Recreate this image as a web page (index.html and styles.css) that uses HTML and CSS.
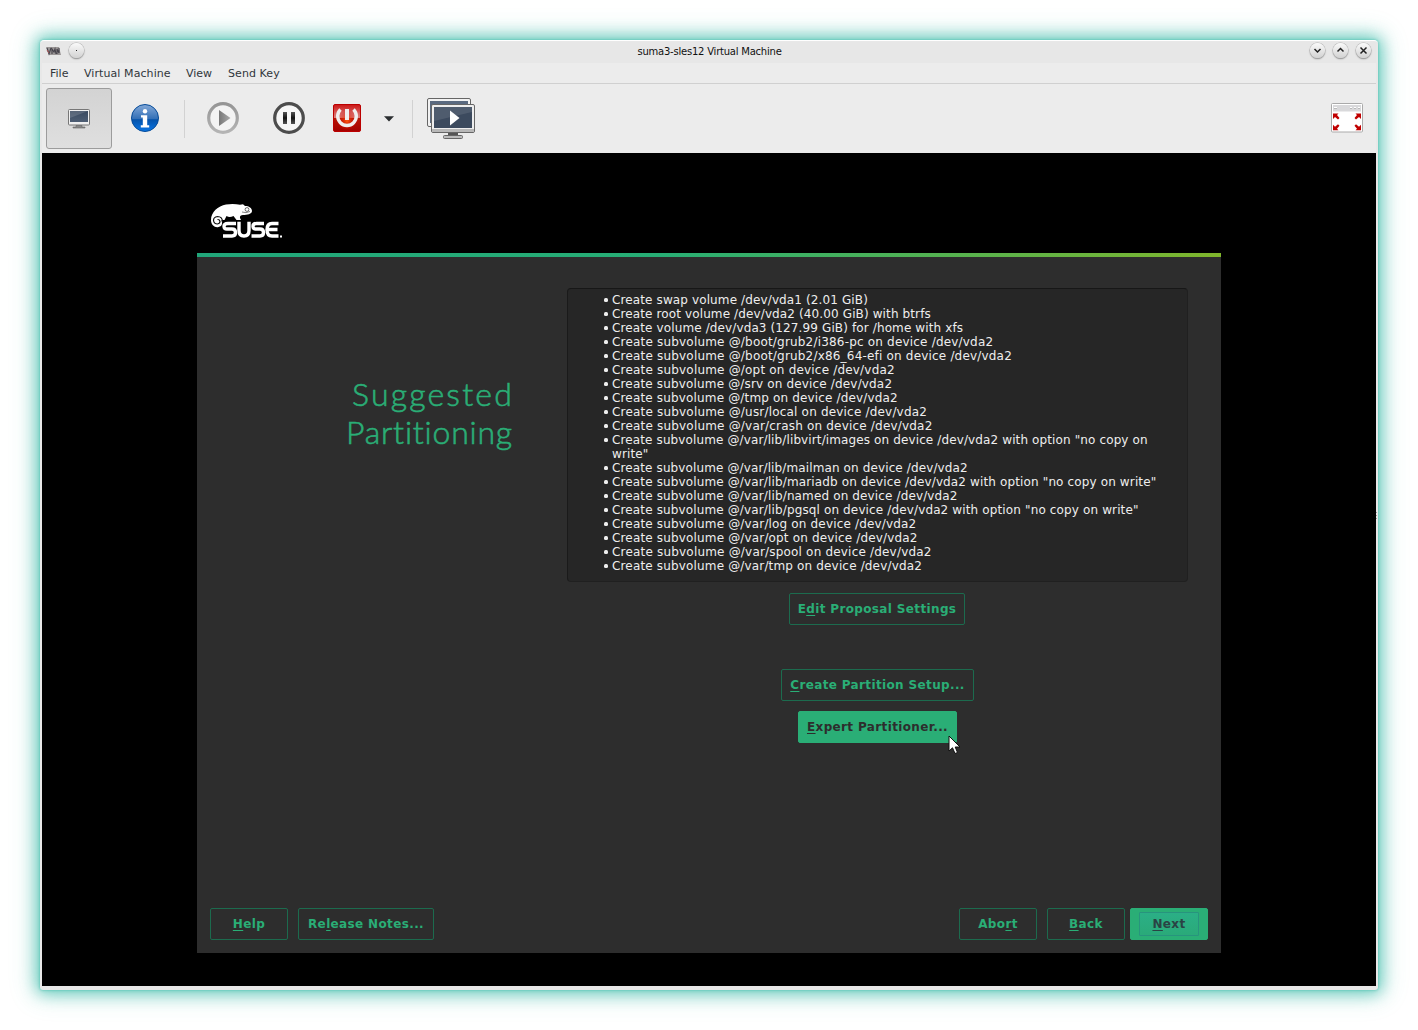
FILE: index.html
```html
<!DOCTYPE html>
<html lang="en">
<head>
<meta charset="utf-8">
<title>suma3-sles12 Virtual Machine</title>
<link rel="stylesheet" href="styles.css">
</head>
<body>
<div class="window">
  <header class="titlebar">
    <svg class="app-icon" width="16" height="10" viewBox="0 0 16 10"><path d="M0 1h13l2 8H3z" fill="#9a9696"/><path d="M1 2l2 6 2-6M6 8V3l2 3 1-3 1 5M11 8V3l2 4V2" fill="none" stroke="#45424a" stroke-width="1.1"/><path d="M1 4l2 3" stroke="#a55" /></svg>
    <span class="round pin"><svg width="15" height="15" viewBox="0 0 15 15"><rect x="7" y="7" width="1" height="1" fill="#222"/></svg></span>
    <h1 class="window-title">suma3-sles12 Virtual Machine</h1>
    <div class="controls">
      <span class="round"><svg width="15" height="15" viewBox="0 0 15 15"><path d="M4.500 6l3 3 3-3"/></svg></span>
      <span class="round"><svg width="15" height="15" viewBox="0 0 15 15"><path d="M4.500 8.500l3-3 3 3"/></svg></span>
      <span class="round"><svg width="15" height="15" viewBox="0 0 15 15"><path d="M4.500 4.500l6 6M10.500 4.500l-6 6"/></svg></span>
    </div>
  </header>
  <nav class="menu"><span class="m1">File</span><span class="m2">Virtual Machine</span><span class="m3">View</span><span class="m4">Send Key</span></nav>
  <div class="toolbar">
    <div class="tool active">
      <svg width="24" height="20" viewBox="0 0 24 20"><defs><linearGradient id="scr" x2="0" y2="1"><stop offset="0" stop-color="#3a4a60"/><stop offset="1" stop-color="#4e5e74"/></linearGradient></defs><rect x="1.500" y=".5" width="21" height="15.500" rx="1" fill="#f0f0f0" stroke="#777"/><rect x="3" y="2" width="18" height="11" fill="url(#scr)"/><path d="M3 2h18L3 9z" fill="#fff" opacity=".15"/><path d="M9 16.500h6v1.500h3v1H6v-1h3z" fill="#888" stroke="#666" stroke-width=".6"/></svg>
    </div>
    <svg class="info" width="28" height="28" viewBox="0 0 28 28"><defs><linearGradient id="blue" x2="0" y2="1"><stop offset="0" stop-color="#84a9d8"/><stop offset=".54" stop-color="#326fb6"/><stop offset=".56" stop-color="#0453ab"/><stop offset="1" stop-color="#0875e6"/></linearGradient></defs><circle cx="14" cy="14" r="13.500" fill="url(#blue)" stroke="#064b98"/><circle cx="14" cy="7.300" r="2.200" fill="#fff"/><path d="M10 11.200h6.200v10h2v2.200h-8.400v-2.200h2v-7.800H10z" fill="#fff"/></svg>
    <i class="sep s1"></i>
    <svg class="play" width="32" height="32" viewBox="0 0 32 32"><defs><linearGradient id="ringlight" x2="0" y2="1"><stop offset="0" stop-color="#959595"/><stop offset="1" stop-color="#b4b4b4"/></linearGradient><linearGradient id="tri"><stop offset="0" stop-color="#777"/><stop offset="1" stop-color="#aaa"/></linearGradient></defs><circle cx="16" cy="16" r="14.300" fill="#f3f3f3" stroke="url(#ringlight)" stroke-width="3.200"/><path d="M12 8v16l11.500-8z" fill="url(#tri)"/></svg>
    <svg class="pause" width="32" height="32" viewBox="0 0 32 32"><defs><linearGradient id="bar" x2="0" y2="1"><stop offset="0" stop-color="#555"/><stop offset=".5" stop-color="#111"/><stop offset="1" stop-color="#555"/></linearGradient></defs><circle cx="16" cy="16" r="14.300" fill="#f6f6f6" stroke="#4c4c4c" stroke-width="3.200"/><path d="M10 10h4v12h-4zM18 10h4v12h-4z" fill="url(#bar)"/></svg>
    <svg class="power" width="28" height="28" viewBox="0 0 28 28"><defs><linearGradient id="red" x2="0" y2="1"><stop offset="0" stop-color="#cc1414"/><stop offset=".48" stop-color="#dd8480"/><stop offset=".5" stop-color="#b81404"/><stop offset="1" stop-color="#a40000"/></linearGradient><radialGradient id="glow"><stop offset="0" stop-color="#ff5a14"/><stop offset="1" stop-color="#c00" stop-opacity="0"/></radialGradient></defs><rect x=".5" y=".5" width="27" height="27" rx="1.500" fill="url(#red)" stroke="#b00"/><circle cx="14" cy="17" r="10" fill="url(#glow)"/><path d="M7.500 5.500a9.300 9.300 0 1 0 13 0" fill="none" stroke="#f0eeee" stroke-width="3.400"/><path d="M14 5v11" stroke="#f0eeee" stroke-width="4"/></svg>
    <svg class="caret" width="10" height="6" viewBox="0 0 10 6"><path d="M0 .3h10L5 5.500z" fill="#2b2e30"/></svg>
    <i class="sep s2"></i>
    <svg class="screens" width="48" height="42" viewBox="0 0 48 42"><rect x=".5" y=".5" width="43" height="28" rx="1.500" fill="#f2f2f2" stroke="#666"/><rect x="3" y="3" width="38" height="22" fill="#5a6a80"/><rect x="4.500" y="6.500" width="43" height="28" rx="1.500" fill="#eee" stroke="#666"/><path d="M5 31h42v2q0 1-1 1H6q-1 0-1-1z" fill="#b8b8b8"/><rect x="7" y="9" width="38" height="21" fill="#3c4a5e"/><path d="M7 9h38v5L7 23z" fill="#fff" opacity=".1"/><path d="M23 12.500v15l9.500-7.500z" fill="#fff"/><path d="M21 35h10v2.500H21z" fill="#555"/><rect x="16.500" y="37.500" width="19" height="3" rx="1" fill="#bbb" stroke="#666"/></svg>
    <svg class="full" width="32" height="30" viewBox="0 0 32 30"><rect x=".5" y=".5" width="31" height="28.500" rx="1" fill="#fff" stroke="#aaa"/><path d="M2 2h28v6.500H2z" fill="#d9d9db"/><path d="M3 4.500h3M19 4.500h2M23 4.500h2M27 4.500h2" stroke="#fff"/><path d="M3 5.500h3M19 5.500h2M23 5.500h2M27 5.500h2" stroke="#aaa" stroke-width=".7"/><g fill="#c00000"><path d="M2 10.500h5.500L6 12l2.500 3-1.500 1.500L4 14l-2 2z"/><path d="M30 10.500h-5.500L26 12l-2.500 3 1.500 1.500L28 14l2 2z"/><path d="M2 27.300h5.500L6 25.800l2.500-3L7 21.300l-3 2.500-2-2z"/><path d="M30 27.300h-5.500l1.500-1.500-2.500-3 1.500-1.500 3 2.500 2-2z"/></g></svg>
  </div>
  <main class="console">
    <div class="installer">
      <div class="brand"><svg width="74" height="36" viewBox="0 0 74 36"><path d="M1 17C1 9 8 3 16 1.500C22 .5 26 1 30 1.700L33 1.200 35 3C39 3 42 5 42 8c0 3-5 4-9 4-2 0-3.500 1-3 3l1 2h-4.500l-3-4q-4 2-7 0l-2 4h-3q2 6-3 7C5 25 1 22 1 17z" fill="#fff"/><circle cx="37" cy="6.500" r="1.900" fill="none" stroke="#333" stroke-width=".7"/><path d="M32 9q4 1.500 8-.5" fill="none" stroke="#333" stroke-width=".6"/><path d="M12.500 19q0-5.500-5-5.500-4 .5-4 4 .5 3.500 4 3.500 2.500-.5 2.500-2.700-.5-2-2.500-1.800" fill="none" stroke="#111" stroke-width="1.200"/><g fill="none" stroke="#fff" stroke-width="3.400" stroke-linejoin="round"><path d="M26 20.500H18q-4 0-4 2.800t3 2.700h5q3.500 0 3.500 3.500T22 33H13"/><path d="M29 18.800v8.700q0 5.500 5 5.500t5-5.500v-8.700"/><path d="M54 20.500h-7.500q-3.500 0-3.500 2.800t3 2.700h4q3.500 0 3.500 3.500T50 33h-8.500"/><path d="M68.500 20.500H62q-5 0-5 6.200t5 6.300h6.500M57 26.500h10.500"/></g><rect x="70" y="32.500" width="2" height="2" fill="#fff"/></svg></div>
      <div class="accent"></div>
      <div class="panel">
        <div class="upper">
          <h2 class="heading"><span class="wide">Suggested</span><br>Partitioning</h2>
          <div class="right">
            <ul class="proposal">
              <li class="snug">Create swap volume /dev/vda1 (2.01 GiB)</li>
              <li class="snug">Create root volume /dev/vda2 (40.00 GiB) with btrfs</li>
              <li class="snug">Create volume /dev/vda3 (127.99 GiB) for /home with xfs</li>
              <li class="loose">Create subvolume @/boot/grub2/i386-pc on device /dev/vda2</li>
              <li class="loose">Create subvolume @/boot/grub2/x86_64-efi on device /dev/vda2</li>
              <li class="loose">Create subvolume @/opt on device /dev/vda2</li>
              <li>Create subvolume @/srv on device /dev/vda2</li>
              <li>Create subvolume @/tmp on device /dev/vda2</li>
              <li class="loose">Create subvolume @/usr/local on device /dev/vda2</li>
              <li class="loose">Create subvolume @/var/crash on device /dev/vda2</li>
              <li class="snug">Create subvolume @/var/lib/libvirt/images on device /dev/vda2 with option "no copy on<br>write"</li>
              <li class="snug">Create subvolume @/var/lib/mailman on device /dev/vda2</li>
              <li class="mid">Create subvolume @/var/lib/mariadb on device /dev/vda2 with option "no copy on write"</li>
              <li class="mid">Create subvolume @/var/lib/named on device /dev/vda2</li>
              <li class="mid">Create subvolume @/var/lib/pgsql on device /dev/vda2 with option "no copy on write"</li>
              <li>Create subvolume @/var/log on device /dev/vda2</li>
              <li>Create subvolume @/var/opt on device /dev/vda2</li>
              <li class="loose">Create subvolume @/var/spool on device /dev/vda2</li>
              <li>Create subvolume @/var/tmp on device /dev/vda2</li>
            </ul>
            <button class="btn edit">E<u>d</u>it Proposal Settings</button>
            <button class="btn create"><u>C</u>reate Partition Setup...</button>
            <button class="btn expert"><u>E</u>xpert Partitioner...<svg class="cursor" width="13" height="20" viewBox="0 0 13 20"><path d="M1 1v15l3.500-3.200L7 18.500l2.500-1L7.200 12H12z" fill="#fff" stroke="#111" stroke-width="1"/></svg></button>
          </div>
        </div>
        <footer class="actions">
          <button class="btn std"><u>H</u>elp</button>
          <button class="btn notes">Re<u>l</u>ease Notes...</button>
          <button class="btn std abort">Abo<u>r</u>t</button>
          <button class="btn std back"><u>B</u>ack</button>
          <button class="btn std next"><span><u>N</u>ext</span></button>
        </footer>
      </div>
    </div>
  </main>
  <i class="grip"></i>
</div>
</body>
</html>
```
FILE: styles.css
```css
* { box-sizing: border-box; }
body { margin: 0; padding: 40px; background: #fff; font-family: "DejaVu Sans", sans-serif; }
svg { display: block; flex: none; }
.window { position: relative; width: 1338px; height: 950px; padding: 1px 2px 4px; background: #e8e8e8; border-top: 1px solid #fff; border-radius: 4px 4px 3px 3px; box-shadow: 0 0 3px #4bc0af, 0 0 16px 3px rgba(60,187,170,.75), 0 0 26px 5px rgba(70,190,172,.28); }
.titlebar { height: 21px; display: flex; align-items: center; padding: 0 5px 4px 4px; background: #e7e7e7; }
.round { width: 15px; height: 15px; border-radius: 50%; background: linear-gradient(#fafafa, #d2d2d2); box-shadow: 0 0 0 .6px #b5b5b5, 0 1px 1.500px #777; }
.round path { fill: none; stroke: #222; stroke-width: 1.500; }
.pin { margin-left: 7px; }
.window-title { margin: 0; flex: 1; text-align: center; font: 10px/15px "DejaVu Sans", sans-serif; letter-spacing: -.22px; color: #111; padding: 1px 0 0 25px; }
.controls { display: flex; gap: 8px; }
.menu { height: 21px; display: flex; background: #ececec; border-bottom: 1px solid #d0d0d0; font-size: 11px; color: #31363b; padding: 0 0 0 8px; white-space: nowrap; }
.menu span { height: 20px; padding-top: 1px; line-height: 20px; }
.m1 { width: 34px; } .m2 { width: 102px; } .m3 { width: 42px; }
.m2, .m4 { letter-spacing: .08px; }
.toolbar { height: 69px; display: flex; align-items: center; background: #ececec; padding: 0 13px 0 4px; }
.toolbar > svg { margin-bottom: 2px; }
.toolbar > .caret, .toolbar > .screens { margin-bottom: 0; }
.tool.active { width: 66px; height: 61px; border: 1px solid #9c9c9c; border-radius: 3px; background: linear-gradient(#d3d3d3, #dfdfdf); display: grid; place-items: center; }
.info { margin-left: 19px; }
.sep { width: 1px; height: 38px; background: #d2d2d2; }
.s1 { margin-left: 25px; } .play { margin-left: 22px; } .pause { margin-left: 34px; } .power { margin-left: 28px; } .caret { margin-left: 23px; } .s2 { margin-left: 18px; } .screens { margin-left: 14px; }
.full { margin-left: auto; }
.console { height: 833px; background: #000; padding-left: 155px; }
.grip { position: absolute; left: 1336px; top: 471px; width: 1px; height: 7px; background: repeating-linear-gradient(#999 0 1px, #e8e8e8 1px 3px); }
.installer { width: 1024px; }
.brand { height: 100px; padding: 50px 0 0 13px; }
.accent { height: 4px; background: linear-gradient(90deg, #21a67a, #27ae75 45%, #80b62c); }
.panel { height: 696px; background: #2d2d2d; display: flex; flex-direction: column; justify-content: space-between; padding: 31px 13px 13px; }
.upper { display: flex; }
.heading { width: 303px; margin: 87px 0 0; text-align: right; font: 300 32px/38px Lato, sans-serif; letter-spacing: .8px; color: #2aae76; -webkit-text-stroke: .6px #2aae76; }
.wide { letter-spacing: 2.200px; margin-right: -1px; }
.right { margin-left: 54px; width: 621px; display: flex; flex-direction: column; align-items: center; }
.proposal { margin: 0 0 11px; width: 621px; height: 294px; padding: 4px 0 0 44px; list-style: none; background: #262626; border: 1px solid #202020; border-top-color: #171717; border-left-color: #1a1a1a; border-radius: 4px; font-size: 12px; line-height: 14px; letter-spacing: .16px; color: #eee; white-space: nowrap; }
.proposal li { position: relative; }
.snug { letter-spacing: .12px; } .mid { letter-spacing: .135px; } .loose { letter-spacing: .19px; }
.proposal li::before { content: ""; position: absolute; left: -8px; top: 5px; width: 4px; height: 4px; border-radius: 1.500px; background: #eee; }
.btn { position: relative; height: 32px; padding: 0; border: 1px solid #1c6b4e; border-radius: 2px; background: #2d2d2d; color: #2aae76; font: bold 12px/16px "DejaVu Sans", sans-serif; letter-spacing: .36px; white-space: nowrap; }
.btn u { text-decoration: underline; text-underline-offset: 2px; text-decoration-thickness: 1px; text-decoration-skip-ink: none; }
.edit { width: 176px; margin: 0 1px 44px 0; } .create { width: 193px; margin-bottom: 10px; } .expert { width: 159px; }
.expert, .next { background: #2aae76; border-color: #2aae76; color: #2d2d2d; }
.cursor { position: absolute; left: 149px; top: 23px; }
.actions { display: flex; }
.std { width: 78px; } .notes { width: 136px; margin-left: 10px; } .abort { margin-left: auto; } .back { margin-left: 10px; } .next { margin-left: 5px; }
.next span { display: block; width: 60px; height: 24px; margin: 0 auto; border: 1px solid #28947e; border-radius: 1px; background: linear-gradient(#2baf86, #2aaa79); color: #2a4344; line-height: 22px; }
```
